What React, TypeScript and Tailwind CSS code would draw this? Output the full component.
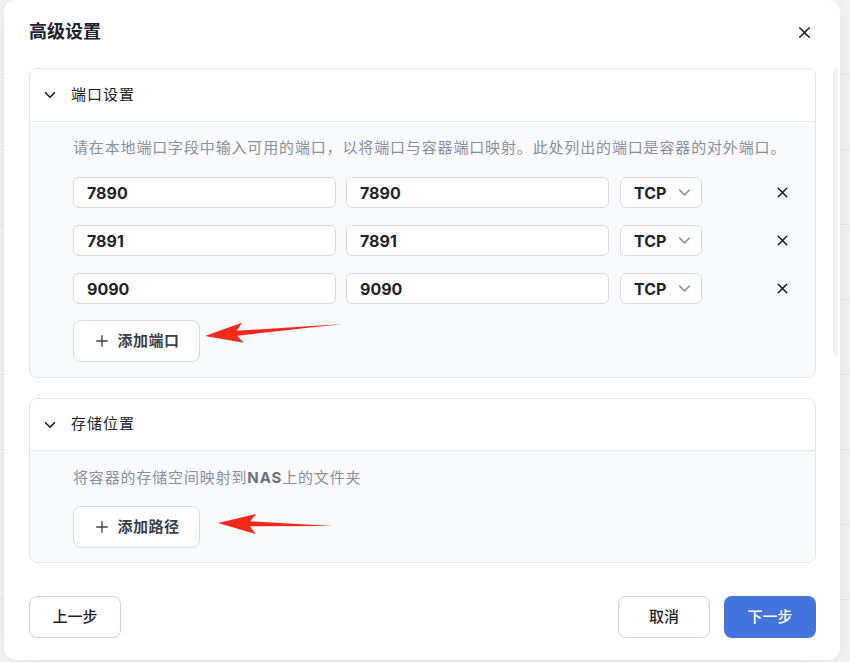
import { ChevronDown, Plus, X } from "lucide-react";

const ports = [
  { local: "7890", container: "7890", proto: "TCP" },
  { local: "7891", container: "7891", proto: "TCP" },
  { local: "9090", container: "9090", proto: "TCP" },
];

function RedArrow({ x1, y1, x2, y2 }: { x1: number; y1: number; x2: number; y2: number }) {
  // tip at (x1,y1), tail at (x2,y2)
  const dx = x2 - x1;
  const dy = y2 - y1;
  const len = Math.hypot(dx, dy);
  const ux = dx / len;
  const uy = dy / len;
  const nx = -uy;
  const ny = ux;
  const hx = x1 + ux * 38;
  const hy = y1 + uy * 38;
  const pts = [
    [x1, y1],
    [hx + nx * 10, hy + ny * 10],
    [hx + nx * 2.5 - ux * 6, hy + ny * 2.5 - uy * 6],
    [x2, y2],
    [hx - nx * 2.5 - ux * 6, hy - ny * 2.5 - uy * 6],
    [hx - nx * 10, hy - ny * 10],
  ]
    .map((p) => p.join(","))
    .join(" ");
  return <polygon points={pts} fill="#f2281b" />;
}

function Background() {
  return (
    <div className="flex flex-col">
      {Array.from({ length: 9 }).map((_, i) => (
        <div key={i} className="h-[75px] border-b border-[#e6e6e8] flex items-center px-1">
          <div className="w-[6px] h-[10px] bg-[#c9c9cc] rounded-sm" />
        </div>
      ))}
    </div>
  );
}

export default function App() {
  return (
    <div
      className="relative w-[850px] h-[662px] overflow-hidden bg-[#f2f2f4]"
      style={{ fontFamily: 'Inter, "Noto Sans CJK SC", "Noto Sans", sans-serif' }}
    >
      <Background />

      {/* Modal */}
      <div className="absolute left-[4px] top-0 w-[836px] h-[660px] bg-white rounded-[12px] shadow-[0_4px_20px_rgba(0,0,0,0.06)] flex flex-col">
        {/* Header */}
        <div className="flex items-center justify-between pl-[25px] pr-[26px] h-[64px]">
          <h1 className="text-[18px] font-bold text-[#1d2129] leading-6">高级设置</h1>
          <X className="w-[19px] h-[19px] text-[#1d2129]" strokeWidth={2} />
        </div>

        {/* Scroll body */}
        <div className="flex flex-col gap-5 pl-[25px] pr-[24px] pt-[4px]">
          {/* Port section */}
          <div className="border border-[#e5e6eb] rounded-[8px] overflow-hidden">
            <div className="h-[53px] flex items-center pl-[11px] gap-[12px] border-b border-[#e5e6eb] bg-white">
              <ChevronDown className="w-[18px] h-[18px] text-[#1d2129]" strokeWidth={2.2} />
              <span className="text-[15px] tracking-[1px] text-[#1d2129]">端口设置</span>
            </div>
            <div className="bg-[#f9fafc] pl-[43px] pr-[17px] pt-[16px] pb-[15px]">
              <p className="text-[15px] tracking-[0.85px] leading-5 text-[#8a8f9c]">
                请在本地端口字段中输入可用的端口，以将端口与容器端口映射。此处列出的端口是容器的对外端口。
              </p>
              <div className="mt-[19px] flex flex-col gap-[17px]">
                {ports.map((p) => (
                  <div key={p.local} className="flex items-center">
                    <div className="w-[263px] h-[31px] bg-white border border-[#d9dce3] rounded-[6px] flex items-center px-[13px] text-[16px] font-bold text-[#1f2329]">
                      {p.local}
                    </div>
                    <div className="ml-[10px] w-[263px] h-[31px] bg-white border border-[#d9dce3] rounded-[6px] flex items-center px-[13px] text-[16px] font-bold text-[#1f2329]">
                      {p.container}
                    </div>
                    <div className="ml-[11px] w-[82px] h-[31px] bg-white border border-[#d9dce3] rounded-[6px] flex items-center pl-[13px] gap-[9px] text-[16px] font-bold text-[#1f2329]">
                      {p.proto}
                      <ChevronDown className="w-[19px] h-[19px] text-[#8f9bb3]" strokeWidth={2.2} />
                    </div>
                    <div className="ml-auto w-[30px] flex justify-center mr-[1px]">
                      <X className="w-[17px] h-[17px] text-[#1d2129]" strokeWidth={2.3} />
                    </div>
                  </div>
                ))}
              </div>
              <button className="mt-[16px] w-[127px] h-[42px] bg-white border border-[#d9dce3] rounded-[8px] flex items-center justify-center gap-[6px] text-[15px] tracking-[0.5px] font-bold text-[#3b3f4a]">
                <Plus className="w-[18px] h-[18px]" strokeWidth={1.8} />
                添加端口
              </button>
            </div>
          </div>

          {/* Storage section */}
          <div className="border border-[#e5e6eb] rounded-[8px] overflow-hidden">
            <div className="h-[52px] flex items-center pl-[11px] gap-[12px] border-b border-[#e5e6eb] bg-white">
              <ChevronDown className="w-[18px] h-[18px] text-[#1d2129]" strokeWidth={2.2} />
              <span className="text-[15px] tracking-[1px] text-[#1d2129]">存储位置</span>
            </div>
            <div className="bg-[#f9fafc] pl-[43px] pr-[17px] pt-[17px] pb-[14px]">
              <p className="text-[15px] tracking-[0.85px] leading-5 text-[#8a8f9c]">
                将容器的存储空间映射到<span className="font-bold text-[#6b7080]">NAS</span>上的文件夹
              </p>
              <button className="mt-[18px] w-[127px] h-[42px] bg-white border border-[#d9dce3] rounded-[8px] flex items-center justify-center gap-[6px] text-[15px] tracking-[0.5px] font-bold text-[#3b3f4a]">
                <Plus className="w-[18px] h-[18px]" strokeWidth={1.8} />
                添加路径
              </button>
            </div>
          </div>
        </div>

        {/* Footer */}
        <div className="mt-auto mb-[22px] flex items-center pl-[25px] pr-[24px]">
          <button className="w-[92px] h-[42px] border border-[#d2d3dc] rounded-[8px] bg-white text-[15px] font-medium text-[#1d2129]">
            上一步
          </button>
          <div className="ml-auto flex gap-[14px]">
            <button className="w-[92px] h-[42px] border border-[#d2d3dc] rounded-[8px] bg-white text-[15px] font-medium text-[#1d2129]">
              取消
            </button>
            <button className="w-[92px] h-[42px] rounded-[8px] bg-[#4374de] text-[15px] font-medium text-white">
              下一步
            </button>
          </div>
        </div>

        {/* scrollbar */}
        <div className="absolute left-[829px] top-[68px] w-[5px] h-[288px] rounded bg-[#f1f1f3]" />
      </div>

      {/* Annotation arrows */}
      <svg className="absolute inset-0 pointer-events-none" width="850" height="662">
        <RedArrow x1={205} y1={336} x2={343} y2={324} />
        <RedArrow x1={218} y1={523} x2={333} y2={526} />
      </svg>
    </div>
  );
}
